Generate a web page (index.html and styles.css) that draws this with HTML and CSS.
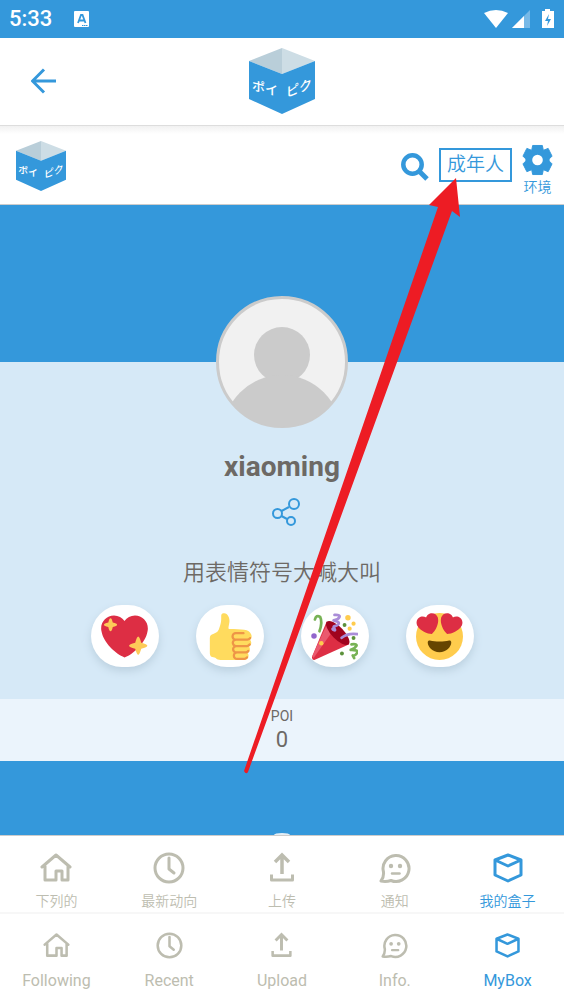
FILE: index.html
```html
<!DOCTYPE html>
<html lang="zh-CN">
<head>
<meta charset="utf-8">
<meta name="viewport" content="width=device-width, initial-scale=1">
<title>MyBox</title>
<link rel="stylesheet" href="styles.css">
</head>
<body>
<svg class="defs" width="0" height="0" aria-hidden="true">
  <symbol id="home" viewBox="0 0 32 32">
    <path d="M2 15 16 3 30 15M5 14V28H16V19H22V28H28V14" fill="none" stroke="currentColor" stroke-width="3" stroke-linejoin="round" stroke-linecap="round"/>
  </symbol>
  <symbol id="clock" viewBox="0 0 32 32">
    <path d="M16 6V17L21 21" fill="none" stroke="currentColor" stroke-width="3" stroke-linecap="round" stroke-linejoin="round"/>
    <circle cx="16" cy="16" r="14" fill="none" stroke="currentColor" stroke-width="3"/>
  </symbol>
  <symbol id="upload" viewBox="0 0 32 32">
    <path d="M16 22V4M9 10 16 3 23 10" fill="none" stroke="currentColor" stroke-width="3.500"/>
    <path d="M5.500 24V28H26.500V24" fill="none" stroke="currentColor" stroke-width="3" stroke-linecap="square" stroke-linejoin="round"/>
  </symbol>
  <symbol id="info" viewBox="0 0 32 32">
    <path d="M4.500 20A13 13 0 1 1 12 28.500Q7 30 2 29Q5 25 4.500 20Z" fill="none" stroke="currentColor" stroke-width="3" stroke-linejoin="round"/>
    <circle cx="12" cy="14" r="2.200" fill="currentColor"/><circle cx="21" cy="14" r="2.200" fill="currentColor"/>
    <path d="M13 21.500H20.500" stroke="currentColor" stroke-width="2.500" stroke-linecap="round"/>
  </symbol>
  <symbol id="box" viewBox="0 0 32 32">
    <path d="M3 8 16 3 29 8V23L16 29 3 23ZM3 8 16 14 29 8" fill="none" stroke="currentColor" stroke-width="3" stroke-linejoin="round"/>
  </symbol>
</svg>

<div class="app">
  <header class="status">
    <span class="time">5:33</span>
    <svg class="note" viewBox="0 0 15 16" aria-hidden="true"><rect width="15" height="16" rx="1" fill="#fff"/><path d="M4 12 7 4H8.500L11.500 12M5.500 9.500H10" fill="none" stroke="#3498db" stroke-width="1.800"/><path d="M8 14.500H14" stroke="#3498db" stroke-width="1.200" stroke-dasharray="1.500 .5"/></svg>
    <svg class="signals" viewBox="0 0 72 20" aria-hidden="true">
      <path d="M0 4Q12-2 24 4L12 19Z" fill="#fff"/>
      <path d="M46 1V19H28Z" fill="#77b9e7"/><path d="M40 7V19H28Z" fill="#fff"/>
      <path d="M58 2H61V0H66V2H70V19H58Z" fill="#fff"/><path d="M65 5 61 12H64L63 17 67 10H64Z" fill="#3498db"/>
    </svg>
  </header>

  <div class="topbar">
    <button class="back" type="button" aria-label="Back"><svg viewBox="0 0 26 26"><path d="M25 13H2M13 1.500 1.500 13 13 24.500" fill="none" stroke="#3498db" stroke-width="3"/></svg></button>
    <svg class="brand" viewBox="0 0 66 66">
      <path d="M0 13 33 0V26Z" fill="#b9ced9"/><path d="M33 0 66 13 33 26Z" fill="#cddde5"/><path d="M0 13 33 26 66 13V51L33 66 0 51Z" fill="#3498db"/>
      <text class="logo-text" x="3" y="41" transform="skewY(14)">ポイ</text>
      <text class="logo-text" x="37" y="63" transform="skewY(-20)">ピク</text>
    </svg>
  </div>

  <main class="page">
    <div class="sitebar">
      <a class="site-logo" href="#" aria-label="Home"><svg viewBox="0 0 66 66">
        <path d="M0 13 33 0V26Z" fill="#b9ced9"/><path d="M33 0 66 13 33 26Z" fill="#cddde5"/><path d="M0 13 33 26 66 13V51L33 66 0 51Z" fill="#3498db"/>
        <text class="logo-text" x="3" y="41" transform="skewY(14)">ポイ</text>
        <text class="logo-text" x="37" y="63" transform="skewY(-20)">ピク</text>
      </svg></a>
      <button class="search" type="button" aria-label="Search"><svg viewBox="0 0 28 28"><circle cx="11.500" cy="11.500" r="9.200" fill="none" stroke="#3498db" stroke-width="4.500"/><path d="M18 18 26 26" stroke="#3498db" stroke-width="5"/></svg></button>
      <a class="adult" href="#">成年人</a>
      <a class="settings" href="#">
        <svg viewBox="0 0 32 32" aria-hidden="true"><path d="M11 1H21L22 6 27 4 31 12 28 15V17L31 20 27 28 22 26 21 31H11L10 26 5 28 1 20 4 17V15L1 12 5 4 10 6Z" fill="#3498db" stroke="#3498db" stroke-linejoin="round"/><circle cx="16" cy="16" r="5.500" fill="#fff"/></svg>
        <span>环境</span>
      </a>
    </div>

    <div class="cover"></div>
    <section class="profile">
      <svg class="avatar" viewBox="0 0 132 132" role="img" aria-label="xiaoming">
        <defs><clipPath id="face"><circle cx="66" cy="66" r="65"/></clipPath></defs>
        <circle cx="66" cy="66" r="64.500" fill="#f1f1f1" stroke="#cbcbcb" stroke-width="3"/>
        <g clip-path="url(#face)" fill="#cbcbcb"><circle cx="66" cy="59" r="28"/><circle cx="66" cy="138" r="59"/></g>
      </svg>
      <h1>xiaoming</h1>
      <button class="share" type="button" aria-label="Share"><svg viewBox="0 0 28 28"><g fill="none" stroke="#3498db" stroke-width="2"><path d="M9.500 13 17 9M9.500 18 15 21"/><circle cx="5.500" cy="15.500" r="4.500"/><circle cx="22" cy="6" r="5"/><circle cx="19" cy="23" r="4"/></g></svg></button>
      <p>用表情符号大喊大叫</p>
      <div class="reactions">
        <button type="button" aria-label="Sparkling heart"><svg viewBox="0 0 36 36">
          <path fill="#dd2e44" d="M35.885 11.833c0-5.450-4.418-9.868-9.867-9.868-3.308 0-6.227 1.633-8.018 4.129-1.791-2.496-4.710-4.129-8.017-4.129-5.450 0-9.868 4.417-9.868 9.868 0 .772.098 1.520.266 2.241C1.751 22.587 11.216 31.568 18 34.034c6.783-2.466 16.249-11.447 17.617-19.959.170-.721.268-1.469.268-2.242z"/>
          <path fill="#fdcb58" d="M7.300 4Q8.300 4 9 7.300 12.300 8 12.300 9T9 10.700Q8.300 14 7.300 14T5.600 10.700Q2.300 10 2.300 9T5.600 7.300Q6.300 4 7.300 4ZM28.500 18Q29.500 18 30.800 22.700 35.500 24 35.500 25T30.800 27.300Q29.500 32 28.500 32T26.200 27.300Q21.500 26 21.500 25T26.200 22.700Q27.500 18 28.500 18Z"/>
        </svg></button>
        <button type="button" aria-label="Thumbs up"><svg viewBox="0 0 36 36">
          <path fill="#ffdb5e" d="M34.956 17.916c0-.503-.12-.975-.321-1.404-1.341-4.326-7.619-4.010-16.549-4.221-1.493-.035-.639-1.798-.115-5.668.341-2.517-1.282-6.382-4.010-6.382-4.498 0-.171 3.548-4.148 12.322-2.125 4.688-6.875 2.062-6.875 6.771v10.719c0 1.833.180 3.595 2.758 3.885C8.195 34.219 7.633 36 11.238 36h18.044c1.838 0 3.333-1.496 3.333-3.334 0-.762-.267-1.456-.698-2.018 1.020-.571 1.720-1.649 1.720-2.899 0-.760-.266-1.454-.696-2.015 1.023-.570 1.725-1.649 1.725-2.901 0-.909-.368-1.733-.961-2.336.757-.611 1.251-1.535 1.251-2.581z"/>
          <path fill="#ee9547" d="M23.020 21.249h8.604c1.170 0 2.268-.626 2.866-1.633.246-.415.109-.952-.307-1.199-.415-.247-.952-.108-1.199.307-.283.479-.806.775-1.361.775h-8.810c-.873 0-1.583-.710-1.583-1.583s.710-1.583 1.583-1.583H28.700c.483 0 .875-.392.875-.875s-.392-.875-.875-.875h-5.888c-1.838 0-3.333 1.495-3.333 3.333 0 1.025.475 1.932 1.205 2.544-.615.605-.998 1.445-.998 2.373 0 1.028.478 1.938 1.212 2.549-.611.604-.990 1.441-.990 2.367 0 1.120.559 2.108 1.409 2.713-.524.589-.852 1.356-.852 2.204 0 1.838 1.495 3.333 3.333 3.333h5.484c1.170 0 2.269-.625 2.867-1.632.247-.415.110-.952-.305-1.199-.416-.245-.953-.110-1.199.305-.285.479-.808.776-1.363.776h-5.484c-.873 0-1.583-.710-1.583-1.583s.710-1.584 1.583-1.584h6.506c1.170 0 2.270-.626 2.867-1.633.247-.416.110-.953-.305-1.199-.419-.251-.954-.110-1.199.305-.289.487-.799.777-1.363.777h-7.063c-.873 0-1.583-.711-1.583-1.584s.710-1.583 1.583-1.583h8.091c1.170 0 2.269-.625 2.867-1.632.247-.415.110-.952-.305-1.199-.417-.246-.953-.110-1.199.305-.289.486-.799.776-1.363.776H23.020c-.873 0-1.583-.710-1.583-1.583s.710-1.584 1.583-1.584z"/>
        </svg></button>
        <button type="button" aria-label="Party popper"><svg viewBox="0 0 36 36">
          <path fill="#dd2e44" d="M12 6.600Q22 12 29.300 24L3 35.800Q.5 36.500.8 33.500Z"/>
          <path fill="#ea596e" d="M12 9 15 16 2 34.500 1 33Z"/>
          <ellipse cx="20.500" cy="15.300" rx="12" ry="4.600" transform="rotate(46 20.500 15.300)" fill="#a0041e"/>
          <g fill="none" stroke-linecap="round" stroke-width="2.100">
            <path stroke="#77b255" d="M3 5Q4 1 7 3 9 7 6.500 14"/>
            <path stroke="#aa8dd8" d="M18 1.500C25 1 21 5 18 5.500S23 6 21 8.500 16 9 18 12 15 12 17 12"/>
            <path stroke="#aa8dd8" d="M23.500 19Q28 15 36 16.200"/>
            <path stroke="#77b255" d="M31 24C38 23 34 27 31 28S38 27 35 31 31 30 33 34.500"/>
          </g>
          <g fill="#ffcc4d"><circle cx="28.300" cy="3.600" r="2.100"/><circle cx="32.600" cy="8.200" r="1.600"/><circle cx="29.600" cy="12" r="1.600"/><circle cx="7.900" cy="23.200" r="1.700"/></g>
          <g fill="#5c913b"><circle cx="25.700" cy="9.200" r="1.500"/><circle cx="32.600" cy="19.100" r="1.500"/><circle cx="23.700" cy="31" r="1.500"/></g>
          <circle cx="2.300" cy="17.600" r="2.100" fill="#9266cc"/>
        </svg></button>
        <button type="button" aria-label="Heart eyes"><svg viewBox="0 0 36 36">
          <circle cx="18" cy="18" r="18" fill="#ffcc4d"/>
          <path fill="#664500" d="M18 21.849c-2.966 0-4.935-.346-7.369-.819-.557-.106-1.638 0-1.638 1.638 0 3.275 3.763 7.369 9.007 7.369s9.007-4.094 9.007-7.369c0-1.638-1.082-1.745-1.638-1.638-2.434.473-4.402.819-7.369.819"/>
          <path fill="#dd2e44" d="M16.650 3.281C15.791.850 13.126-.426 10.694.431c-1.476.520-2.521 1.711-2.928 3.104-1.191-.829-2.751-1.100-4.225-.580C1.111 3.813-.167 6.480.692 8.911c.122.344.284.663.472.958 1.951 3.582 7.588 6.100 11.001 6.131 2.637-2.167 5.446-7.665 4.718-11.677-.038-.348-.113-.698-.233-1.042zm2.700 0C20.209.850 22.875-.426 25.306.431c1.476.520 2.521 1.711 2.929 3.104 1.191-.829 2.751-1.100 4.225-.580 2.430.858 3.707 3.525 2.850 5.956-.123.344-.284.663-.473.958-1.951 3.582-7.588 6.100-11.002 6.131-2.637-2.167-5.445-7.665-4.717-11.677.037-.348.112-.698.232-1.042z"/>
        </svg></button>
      </div>
    </section>
    <dl class="stats"><dt>POI</dt><dd>0</dd></dl>
    <div class="feed"><div class="loader"></div></div>
  </main>

  <nav class="tabs site-tabs" aria-label="网站导航">
    <a href="#"><svg><use href="#home"/></svg><span>下列的</span></a>
    <a href="#"><svg><use href="#clock"/></svg><span>最新动向</span></a>
    <a href="#"><svg><use href="#upload"/></svg><span>上传</span></a>
    <a href="#"><svg><use href="#info"/></svg><span>通知</span></a>
    <a class="current" href="#" aria-current="page"><svg><use href="#box"/></svg><span>我的盒子</span></a>
  </nav>
  <nav class="tabs app-tabs" aria-label="App">
    <a href="#"><svg><use href="#home"/></svg><span>Following</span></a>
    <a href="#"><svg><use href="#clock"/></svg><span>Recent</span></a>
    <a href="#"><svg><use href="#upload"/></svg><span>Upload</span></a>
    <a href="#"><svg><use href="#info"/></svg><span>Info.</span></a>
    <a class="current" href="#" aria-current="page"><svg><use href="#box"/></svg><span>MyBox</span></a>
  </nav>

  <svg class="arrow" viewBox="0 0 218 598" aria-hidden="true"><path d="M212 0 216 39 208 33 4 594Q2 597 0 593L194 29 185 27Z" fill="#ed1c24"/></svg>
</div>
</body>
</html>
```
FILE: styles.css
```css
* { box-sizing: border-box; }

body {
  margin: 0;
  color: #6d6965;
  background: #fff;
  font-family: Roboto, "Noto Sans CJK SC", sans-serif;
}

a { color: #3498db; text-decoration: none; }
button { padding: 0; border: 0; background: none; font: inherit; cursor: pointer; }
svg { display: block; }
.defs { position: absolute; }

.app {
  position: relative;
  display: flex;
  flex-direction: column;
  min-height: 100vh;
  overflow: hidden;
}

.logo-text {
  fill: #fff;
  font: 500 13px "Noto Sans CJK JP", sans-serif;
}

.status {
  display: flex;
  align-items: center;
  padding: 6px 8px 6px 9px;
  color: #fff;
  background: #3498db;
}
.time { font-size: 22px; font-weight: 500; line-height: 26px; }
.note { width: 15px; height: 16px; margin-left: 22px; }
.signals { width: 72px; height: 20px; margin-left: auto; }

.topbar {
  display: grid;
  grid-template-columns: 1fr auto 1fr;
  align-items: center;
  padding: 10px 31px 11px;
  border-bottom: 1px solid #ddd;
}
.back { width: 26px; height: 26px; }
.brand { width: 66px; height: 66px; }

.page {
  display: flex;
  flex: 1;
  flex-direction: column;
}

.sitebar {
  display: flex;
  align-items: flex-start;
  padding: 15px 11px 7px 15px;
  border-bottom: 1px solid #ccc;
  background: linear-gradient(#f1f1f1, #fff 8px);
}
.site-logo { margin-right: auto; }
.site-logo svg { width: 52px; height: 50px; }
.search { margin-top: 12px; }
.search svg { width: 28px; height: 28px; }
.adult {
  margin: 7px 10px 0;
  padding: 0 6px;
  border: 2px solid #3498db;
  font-size: 19px;
  font-weight: 350;
  line-height: 30px;
}
.settings {
  display: flex;
  flex-direction: column;
  align-items: center;
  gap: 1px;
  margin-top: 3px;
  font-size: 14px;
  font-weight: 350;
  line-height: 20px;
}
.settings svg { width: 31px; height: 32px; }

.cover { height: 157px; background: #3498db; }

.profile {
  display: flex;
  flex-direction: column;
  align-items: center;
  padding-bottom: 32px;
  background: #d6e9f7;
}
.avatar { width: 132px; height: 132px; margin-top: -66px; }
h1 { margin: 22px 0 14px; font-size: 28px; line-height: 34px; }
.share { padding-left: 8px; }
.share svg { width: 28px; height: 28px; }
.profile p {
  margin: 30px 0 16px;
  font-size: 22px;
  font-weight: 350;
  line-height: 33px;
}
.reactions { display: flex; gap: 37px; }
.reactions button {
  display: grid;
  place-items: center;
  width: 68px;
  height: 62px;
  border-radius: 32px;
  background: #fff;
  box-shadow: 0 4px 8px #bbd0df;
}
.reactions svg { width: 47px; height: 47px; }

.stats {
  margin: 0;
  padding: 8px 0 6px;
  text-align: center;
  background: #ebf4fc;
}
.stats dt { font-size: 14px; line-height: 18px; }
.stats dd { margin: 0; font-size: 22px; line-height: 30px; }

.feed {
  display: flex;
  flex: 1;
  align-items: flex-end;
  justify-content: center;
  min-height: 70px;
  background: #3498db;
}
.loader {
  width: 16px;
  height: 2px;
  border-radius: 50% 50% 0 0 / 100% 100% 0 0;
  background: #e4eef5;
}

.tabs { display: grid; grid-template-columns: repeat(5, 1fr); }
.tabs a {
  display: flex;
  flex-direction: column;
  align-items: center;
  color: #bdbdb0;
}
.tabs a.current { color: #3498db; }
.site-tabs {
  padding: 16px 0 1px;
  border-top: 1px solid #ccc;
  font-size: 14px;
  font-weight: 350;
  line-height: 20px;
}
.site-tabs svg { width: 32px; height: 32px; margin-bottom: 7px; }
.app-tabs {
  padding: 18px 0 11px;
  border-top: 2px solid #f7f7f7;
  font-size: 16px;
  line-height: 20px;
}
.app-tabs svg { width: 27px; height: 27px; margin-bottom: 12px; }

.arrow {
  position: absolute;
  top: 178px;
  left: calc(50% - 38px);
  width: 218px;
  height: 598px;
}
```
